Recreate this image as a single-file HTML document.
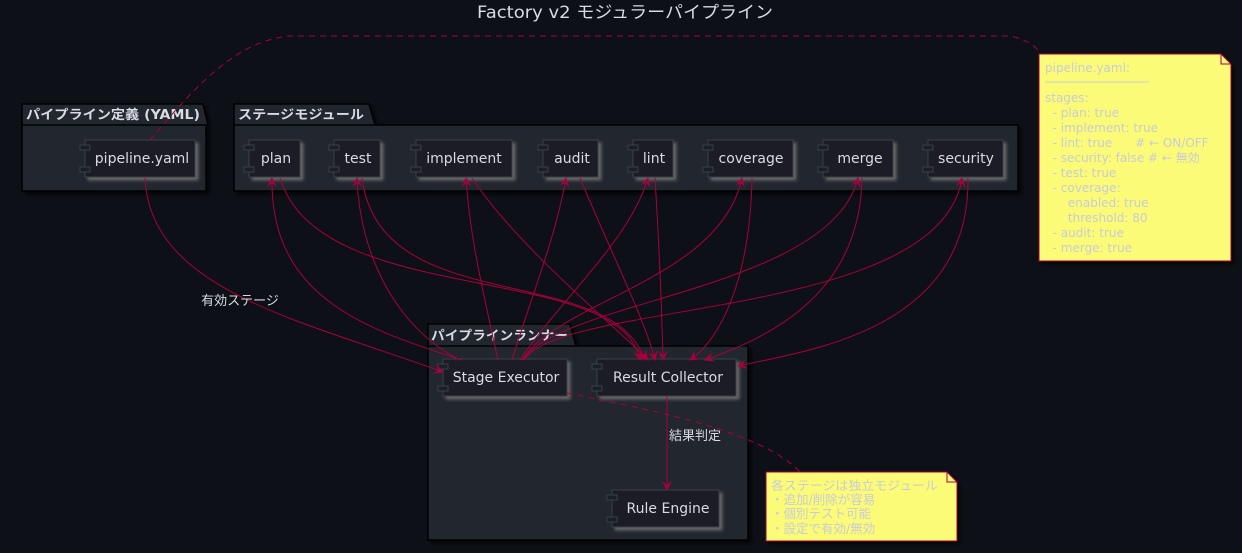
<!DOCTYPE html>
<html><head><meta charset="utf-8"><style>
html,body{margin:0;padding:0;background:#0d1017;}
svg{display:block;font-family:"DejaVu Sans","Noto Sans CJK JP",sans-serif;}
</style></head><body>
<svg width="1242" height="553" viewBox="0 0 1242 553" xmlns="http://www.w3.org/2000/svg">
<defs>
<marker id="a" viewBox="0 0 10 10" refX="9" refY="5" markerWidth="10" markerHeight="10" orient="auto" markerUnits="userSpaceOnUse">
<path d="M0,0 L10,5 L0,10 L4,5 Z" fill="#a8003c"/></marker>
<filter id="sh" x="-5%" y="-5%" width="115%" height="130%"><feDropShadow dx="3" dy="3" stdDeviation="1.5" flood-color="#777" flood-opacity="0.8"/></filter>
<filter id="sh2" x="-5%" y="-5%" width="115%" height="130%"><feDropShadow dx="3" dy="3" stdDeviation="1.5" flood-color="#000" flood-opacity="0.6"/></filter>
</defs>
<rect width="1242" height="553" fill="#0d1017"/>
<text x="477" y="18" textLength="296" lengthAdjust="spacingAndGlyphs" font-size="17" fill="#d8dbe0">Factory v2 モジュラーパイプライン</text>

<g filter="url(#sh2)" stroke="#000" stroke-width="1.5" fill="#23272e">
<path d="M22,125 V104 H203 L208,125"/>
<rect x="22" y="125" width="184" height="66"/>
<path d="M234,125 V104 H369 L375,125"/>
<rect x="234" y="125" width="784" height="66"/>
<path d="M428,346 V324 H570 L576,346"/>
<rect x="428" y="346" width="320" height="194"/>
</g>
<g font-size="13" font-weight="bold" fill="#d8dbe0">
<text x="26" y="119" textLength="174" lengthAdjust="spacingAndGlyphs">パイプライン定義 (YAML)</text>
<text x="238" y="119" textLength="126" lengthAdjust="spacingAndGlyphs">ステージモジュール</text>
<text x="431" y="340" textLength="137" lengthAdjust="spacingAndGlyphs">パイプラインランナー</text>
</g>

<g stroke="#3a3f47" stroke-width="1" fill="#1b1f26">
<g filter="url(#sh)">
<rect x="85" y="140" width="110" height="37"/>
<rect x="249" y="140" width="51" height="37"/>
<rect x="334" y="140" width="46" height="37"/>
<rect x="416" y="140" width="96" height="37"/>
<rect x="543" y="140" width="55" height="37"/>
<rect x="633" y="140" width="40" height="37"/>
<rect x="708" y="140" width="85" height="37"/>
<rect x="823" y="140" width="70" height="37"/>
<rect x="928" y="140" width="75" height="37"/>
<rect x="443" y="359" width="124" height="37"/>
<rect x="597" y="359" width="139" height="37"/>
<rect x="612" y="490" width="107" height="37"/>
</g>
<g>
<rect x="80" y="145" width="10" height="5"/><rect x="80" y="167" width="10" height="5"/>
<rect x="244" y="145" width="10" height="5"/><rect x="244" y="167" width="10" height="5"/>
<rect x="329" y="145" width="10" height="5"/><rect x="329" y="167" width="10" height="5"/>
<rect x="411" y="145" width="10" height="5"/><rect x="411" y="167" width="10" height="5"/>
<rect x="538" y="145" width="10" height="5"/><rect x="538" y="167" width="10" height="5"/>
<rect x="628" y="145" width="10" height="5"/><rect x="628" y="167" width="10" height="5"/>
<rect x="703" y="145" width="10" height="5"/><rect x="703" y="167" width="10" height="5"/>
<rect x="818" y="145" width="10" height="5"/><rect x="818" y="167" width="10" height="5"/>
<rect x="923" y="145" width="10" height="5"/><rect x="923" y="167" width="10" height="5"/>
<rect x="438" y="364" width="10" height="5"/><rect x="438" y="386" width="10" height="5"/>
<rect x="592" y="364" width="10" height="5"/><rect x="592" y="386" width="10" height="5"/>
<rect x="607" y="495" width="10" height="5"/><rect x="607" y="517" width="10" height="5"/>
</g>
</g>
<g font-size="14" fill="#d8dbe0" text-anchor="middle">
<text x="142" y="163">pipeline.yaml</text>
<text x="276" y="163">plan</text>
<text x="358" y="163">test</text>
<text x="464" y="163">implement</text>
<text x="572" y="163">audit</text>
<text x="654" y="163">lint</text>
<text x="751" y="163">coverage</text>
<text x="860" y="163">merge</text>
<text x="966" y="163">security</text>
<text x="506" y="382">Stage Executor</text>
<text x="668" y="382">Result Collector</text>
<text x="668" y="513">Rule Engine</text>
</g>

<g fill="none" stroke="#a8003c" stroke-width="1" marker-end="url(#a)">
<path d="M145,178 C150,290 300,320 443,372"/>
<path d="M462,360 C370,330 270,300 272,178"/>
<path d="M460,360 C400,330 360,260 357,178"/>
<path d="M498,360 C485,300 470,240 466,178"/>
<path d="M512,360 C530,300 555,240 566,178"/>
<path d="M520,360 C560,300 630,240 648,178"/>
<path d="M522,360 C560,300 720,280 742,178"/>
<path d="M523,360 C560,300 830,290 858,178"/>
<path d="M524,360 C560,300 940,320 962,178"/>
<path d="M280,178 C320,310 620,260 640,360"/>
<path d="M362,178 C380,320 610,260 645,360"/>
<path d="M472,178 C520,250 620,330 648,360"/>
<path d="M580,178 C610,250 645,320 655,360"/>
<path d="M655,178 C660,260 662,320 663,360"/>
<path d="M752,178 C750,280 720,340 690,360"/>
<path d="M862,178 C860,300 760,340 705,360"/>
<path d="M968,178 C970,330 810,350 738,366"/>
<path d="M667,396 V490"/>
</g>
<text x="240" y="305" font-size="13" fill="#d8dbe0" text-anchor="middle">有効ステージ</text>
<text x="695" y="440" font-size="13" fill="#d8dbe0" text-anchor="middle">結果判定</text>

<g fill="none" stroke="#a8003c" stroke-width="1" stroke-dasharray="6,5">
<path d="M150,140 C200,80 240,40 290,36 L1010,36 C1030,40 1040,50 1040,55"/>
<path d="M567,393 C650,410 760,430 800,472"/>
</g>

<g filter="url(#sh2)" stroke="#a8003c" stroke-width="1" fill="#fbfb77">
<path d="M1039,54 H1221 L1231,64 V261 H1039 Z"/>
<path d="M766,472 H947 L957,482 V541 H766 Z"/>
</g>
<path d="M1221,54 V64 H1231" fill="none" stroke="#a8003c"/>
<path d="M947,472 V482 H957" fill="none" stroke="#a8003c"/>
<g font-size="12" fill="#c8ccd8">
<text x="1045" y="72">pipeline.yaml:</text>
<line x1="1045" y1="82" x2="1149" y2="82" stroke="#c8ccd8"/>
<text x="1045" y="102">stages:</text>
<text x="1045" y="117" xml:space="preserve">  - plan: true</text>
<text x="1045" y="132" xml:space="preserve">  - implement: true</text>
<text x="1045" y="147" xml:space="preserve">  - lint: true      # ← ON/OFF</text>
<text x="1045" y="162" xml:space="preserve">  - security: false # ← 無効</text>
<text x="1045" y="177" xml:space="preserve">  - test: true</text>
<text x="1045" y="192" xml:space="preserve">  - coverage:</text>
<text x="1045" y="207" xml:space="preserve">      enabled: true</text>
<text x="1045" y="222" xml:space="preserve">      threshold: 80</text>
<text x="1045" y="237" xml:space="preserve">  - audit: true</text>
<text x="1045" y="252" xml:space="preserve">  - merge: true</text>
</g>
<g font-size="12.5" fill="#c8ccd8">
<text x="771" y="490" textLength="167" lengthAdjust="spacingAndGlyphs">各ステージは独立モジュール</text>
<text x="771" y="504">・追加/削除が容易</text>
<text x="771" y="518">・個別テスト可能</text>
<text x="771" y="533">・設定で有効/無効</text>
</g>
</svg>
</body></html>
